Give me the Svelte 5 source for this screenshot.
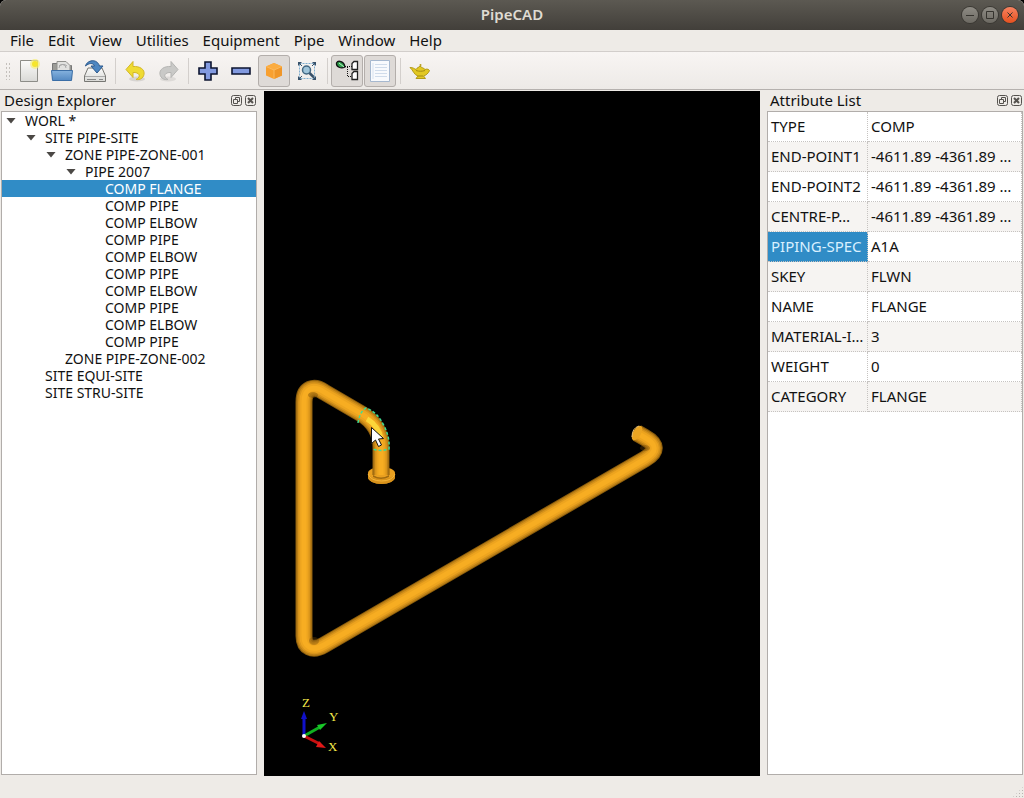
<script lang="ts">
  const menus = ['File', 'Edit', 'View', 'Utilities', 'Equipment', 'Pipe', 'Window', 'Help']

  const tools = [
    { id: 'new', label: 'New' },
    { id: 'open', label: 'Open' },
    { id: 'save', label: 'Save' },
    { id: 'sep' },
    { id: 'undo', label: 'Undo' },
    { id: 'redo', label: 'Redo' },
    { id: 'sep' },
    { id: 'add', label: 'Add' },
    { id: 'remove', label: 'Remove' },
    { id: 'shaded', label: 'Shaded', checked: true },
    { id: 'fit', label: 'Fit all' },
    { id: 'sep' },
    { id: 'tree', label: 'Design Explorer', checked: true },
    { id: 'list', label: 'Attribute List', checked: true },
    { id: 'sep' },
    { id: 'about', label: 'About' },
  ]

  const nodes = [
    { level: 1, text: 'WORL *', open: true },
    { level: 2, text: 'SITE PIPE-SITE', open: true },
    { level: 3, text: 'ZONE PIPE-ZONE-001', open: true },
    { level: 4, text: 'PIPE 2007', open: true },
    { level: 5, text: 'COMP FLANGE' },
    { level: 5, text: 'COMP PIPE' },
    { level: 5, text: 'COMP ELBOW' },
    { level: 5, text: 'COMP PIPE' },
    { level: 5, text: 'COMP ELBOW' },
    { level: 5, text: 'COMP PIPE' },
    { level: 5, text: 'COMP ELBOW' },
    { level: 5, text: 'COMP PIPE' },
    { level: 5, text: 'COMP ELBOW' },
    { level: 5, text: 'COMP PIPE' },
    { level: 3, text: 'ZONE PIPE-ZONE-002' },
    { level: 2, text: 'SITE EQUI-SITE' },
    { level: 2, text: 'SITE STRU-SITE' },
  ]

  const attributes = [
    ['TYPE', 'COMP'],
    ['END-POINT1', '-4611.89 -4361.89 …'],
    ['END-POINT2', '-4611.89 -4361.89 …'],
    ['CENTRE-P…', '-4611.89 -4361.89 …'],
    ['PIPING-SPEC', 'A1A'],
    ['SKEY', 'FLWN'],
    ['NAME', 'FLANGE'],
    ['MATERIAL-I…', '3'],
    ['WEIGHT', '0'],
    ['CATEGORY', 'FLANGE'],
  ]

  // centre line of the pipe run, drawn once per shade
  const run = 'M373 342 L380 346 Q400 357 381 368 L60 554 C48 561 40 556 40 545 L40 311 C40 297 50 294 60 301 L96 322 Q117 334 117 357 L117 384'
  const shades = [
    { color: '#8a5c0c', width: 17 },
    { color: '#bb7f16', width: 15 },
    { color: '#d8941b', width: 12 },
    { color: '#eda41f', width: 9 },
    { color: '#f7ad22', width: 5 },
  ]

  let selected = $state(4)
  let current = $state(4)
</script>

{#snippet dockTitle(title: string)}
  <header class="dock-title">
    <h2>{title}</h2>
    <button aria-label="Float {title}">
      <svg viewBox="0 0 11 11">
        <rect x=".5" y=".5" width="10" height="10" rx="2" />
        <path d="M4.5 4.5v-2h4v4h-2M2.5 4.5h4v4h-4z" />
      </svg>
    </button>
    <button aria-label="Close {title}">
      <svg viewBox="0 0 11 11">
        <rect x=".5" y=".5" width="10" height="10" rx="2" />
        <path class="cross" d="M3 3l5 5M8 3l-5 5" />
      </svg>
    </button>
  </header>
{/snippet}

<div class="window">
  <header class="titlebar">
    <h1>PipeCAD</h1>
    <div class="controls">
      <button aria-label="Minimize"><svg viewBox="0 0 16 16"><path d="M4 8.5h8" /></svg></button>
      <button aria-label="Maximize"><svg viewBox="0 0 16 16"><path d="M4.5 4.5h7v7h-7z" /></svg></button>
      <button class="close" aria-label="Close"><svg viewBox="0 0 16 16"><path d="M5.5 5.5l5 5M10.5 5.5l-5 5" /></svg></button>
    </div>
  </header>

  <nav class="menubar">
    {#each menus as menu}
      <button>{menu}</button>
    {/each}
  </nav>

  <div class="toolbar" role="toolbar" aria-label="Main">
    <span class="handle"></span>
    {#each tools as tool}
      {#if tool.id === 'sep'}
        <span class="sep"></span>
      {:else}
        <button class:checked={tool.checked} aria-label={tool.label}>
          <svg viewBox="0 0 24 24">
            {#if tool.id === 'new'}
              <path d="M3.5 1.5h17v21h-17z" fill="url(#paper)" stroke="#8d8d88" />
              <circle cx="18" cy="5" r="5" fill="#f7ee75" opacity=".7" />
              <circle cx="18" cy="5" r="3" fill="#f5e52d" />
            {:else if tool.id === 'open'}
              <path d="M2.5 20V4.5h5l2 2h12V20z" fill="#9c9c98" stroke="#777" />
              <path d="M7 2.5h9l4 4V14H7z" fill="#e2e2e0" stroke="#92928e" />
              <path d="M9 9a3 3 0 0 1 7 0M9 7a5 4 0 0 1 8 0" fill="none" stroke="#aaa" />
              <path d="M1.5 11.5h21l-1 10h-19z" fill="url(#folder)" stroke="#3b6ea6" />
            {:else if tool.id === 'save'}
              <path d="M5 9h14l3.5 8v5.5h-21V17z" fill="url(#paper)" stroke="#777773" />
              <path d="M2 17.5h20" stroke="#aaa" />
              <path d="M4 20.5h9M16 20.5h4" stroke="#888" />
              <path d="M2.5 7C4 1 14-1 16.5 7H20l-6 7-6-7h3.5C10 3.5 6 4 2.5 7z" fill="#4d86c1" stroke="#2c598d" />
            {:else if tool.id === 'undo'}
              <ellipse cx="14" cy="20" rx="8" ry="2.5" fill="#000" opacity=".1" />
              <path d="M10 2.5v5c7-.5 12 3 11 8-1 4-4 5.5-8 5 6-3 3-7.5-3-7v5l-7-8z" fill="#efdb33" stroke="#d2b728" />
            {:else if tool.id === 'redo'}
              <ellipse cx="12" cy="20" rx="8" ry="2.5" fill="#000" opacity=".08" />
              <path d="M15 2.5v5c-7-.5-12 3-11 8 1 4 4 5.5 8 5-6-3-3-7.5 3-7v5l7-8z" fill="#c9c9c7" stroke="#b5b5b3" />
            {:else if tool.id === 'add'}
              <path d="M9 3h6v6h6v6h-6v6H9v-6H3V9h6z" fill="#829ae0" stroke="#0c1430" stroke-width="1.6" />
            {:else if tool.id === 'remove'}
              <path d="M3 9h18v6H3z" fill="#829ae0" stroke="#0c1430" stroke-width="1.6" />
            {:else if tool.id === 'shaded'}
              <path d="M12 4l8 3.5v9L12 20l-8-3.5v-9z" fill="#f8a030" />
              <path d="M12 4l8 3.5-8 3.5-8-3.5z" fill="#fbac40" />
              <path d="M12 11v9l8-3.5v-9z" fill="#f09628" />
              <path d="M4 7.5l8 3.5 8-3.5M12 11v9" fill="none" stroke="#fcb95c" />
            {:else if tool.id === 'fit'}
              <path d="M4.5 4.5h15v15h-15z" fill="none" stroke="#7faed0" stroke-dasharray="2 1" />
              <path d="M4 4l3 3M20 4l-3 3M4 20l3-3M20 20l-3-3" stroke="#37516a" />
              <path d="M3 3h4l-4 4zM21 3v4l-4-4zM3 21v-4l4 4zM21 21h-4l4-4z" fill="#37516a" />
              <circle cx="11.5" cy="11" r="4" fill="#9fc4d9" stroke="#426782" stroke-width="1.5" />
              <path d="M14.5 14l4 4" stroke="#37516a" stroke-width="2.5" />
            {:else if tool.id === 'tree'}
              <path d="M1.5 4C3 1 9 2 10 8 6 10 1 8 1.5 4z" fill="#2da04b" stroke="#111" stroke-width="1.3" />
              <path d="M4 4l5 4" stroke="#c4efcc" />
              <path d="M10 7.5h7M12.5 8v9M13 17.5h4" fill="none" stroke="#111" stroke-dasharray="1 1" />
              <path d="M17 4.5l2-2h3.5v8H17zM17 14.5l2-2h3.5v8H17z" fill="#fff" stroke="#222" stroke-width="1.3" />
            {:else if tool.id === 'list'}
              <path d="M2.5 1.5h19v21h-19z" fill="#f8fafd" stroke="#a6b8cf" />
              <path d="M7 5.5h12M7 8.5h12M7 11.5h12M7 14.5h12M7 17.5h12" stroke="#d0dceb" />
              <path d="M5 4v16" stroke="#d7e2f0" />
            {:else}
              <path d="M2 8.5c3 0 4 1 6 2 1-2 3-2 4-3.5 1 1.5 4 2 5 3.5 2-1 4 0 4.5 1-1 3-4 5-6 5.5l2 2.5H8l2-2.500C6 16 5 11 2 8.5z" fill="#e2c821" stroke="#b39b18" />
              <path d="M8 11.5c3 1 6 1 9 0M10 17h5" fill="none" stroke="#a38c12" />
              <circle cx="12.5" cy="6" r="1" fill="#b79f18" />
            {/if}
          </svg>
        </button>
      {/if}
    {/each}
  </div>

  <main>
    <section class="dock left">
      {@render dockTitle('Design Explorer')}
      <ul class="tree" role="tree" aria-label="Design Explorer">
        {#each nodes as node, i}
          <li class="level-{node.level}" role="treeitem" aria-level={node.level} aria-selected={selected === i}>
            <button class:selected={selected === i} onclick={() => (selected = i)}>
              <span class="arrow" class:open={node.open}></span>{node.text}
            </button>
          </li>
        {/each}
      </ul>
    </section>

    <section class="view" aria-label="3D view">
      <svg viewBox="0 0 496 685">
        <!-- flange -->
        <path d="M104 382v4a13.5 7 0 0 0 27 0v-4z" fill="#d8921b" />
        <ellipse cx="117.5" cy="382" rx="13.5" ry="6" fill="#e9a020" />
        {#each shades as shade}
          <path d={run} fill="none" stroke={shade.color} stroke-width={shade.width} stroke-linejoin="round" />
        {/each}
        <path d="M104 383v3a13.5 7 0 0 0 27 0v-3q-3 6-13.5 6t-13.5-6z" fill="#d8921b" />
        <path d="M109 384q8 5 16 0v2q-8 4-16 0z" fill="#a06a10" />
        <path d="M104 383q3 7 13.5 7t13.500-7" fill="none" stroke="#f5b53a" />
        <!-- open pipe end -->
        <ellipse cx="373" cy="342" rx="4" ry="8" transform="rotate(30 373 342)" fill="#eba522" />
        <path d="M368 346q0-9 7-11" fill="none" stroke="#e8c072" />
        <!-- inner side of the bends -->
        <ellipse cx="49" cy="304" rx="5" ry="3" fill="#704808" opacity=".4" />
        <ellipse cx="50" cy="550" rx="5" ry="4" fill="#704808" opacity=".35" />
        <ellipse cx="381" cy="357" rx="5" ry="3" fill="#704808" opacity=".35" />
        <!-- highlighted elbow -->
        <path d="M103 328q12 7 14 20" fill="none" stroke="#fff04a" stroke-width="5" opacity=".6" />
        <path d="M94 332q2-12 8-15 11 4 17 16 7 12 6 25-8 3-16 0" fill="none" stroke="#3fdc95" stroke-width="1.5" stroke-dasharray="3 2" />
        <!-- mouse pointer -->
        <path d="M107.5 336.5v16l4-3.5 3 6.5 3-1.5-3-6 5-.5z" fill="#fff" stroke="#111" />
        <!-- axes -->
        <g class="axes">
          <path d="M40 645v-18" stroke="#1010c8" stroke-width="3" />
          <path d="M37 628l3-8 3 8z" fill="#1010c8" />
          <path d="M40 645l16-9" stroke="#10b020" stroke-width="3" />
          <path d="M53 634l10-2-7 7z" fill="#18c828" />
          <path d="M40 645l16 8" stroke="#c81010" stroke-width="3" />
          <path d="M55 650l7 7-10-1z" fill="#e01818" />
          <circle cx="40" cy="645" r="2" fill="#fff" />
          <text x="38" y="616">Z</text>
          <text x="65" y="630">Y</text>
          <text x="64" y="660">X</text>
        </g>
      </svg>
    </section>

    <section class="dock right">
      {@render dockTitle('Attribute List')}
      <div class="sheet">
        <table>
          <tbody>
            {#each attributes as [name, value], i}
              <tr>
                <th scope="row" class:selected={current === i} onclick={() => (current = i)}>{name}</th>
                <td>{value}</td>
              </tr>
            {/each}
          </tbody>
        </table>
      </div>
    </section>
  </main>

  <footer class="statusbar"><span class="grip"></span></footer>
</div>

<svg class="defs" aria-hidden="true">
  <defs>
    <linearGradient id="paper" x1="0" y1="0" x2="0" y2="1">
      <stop offset="0" stop-color="#fbfbfa" /><stop offset="1" stop-color="#d9d9d6" />
    </linearGradient>
    <linearGradient id="folder" x1="0" y1="0" x2="0" y2="1">
      <stop offset="0" stop-color="#85b2de" /><stop offset="1" stop-color="#5489c2" />
    </linearGradient>
  </defs>
</svg>

<style>
  :global(body) { margin: 0; background: #000; }
  .window {
    display: flex; flex-direction: column; min-height: 100vh;
    background: #eeebe7; color: #111;
    font-family: "Noto Sans", "Open Sans", sans-serif; font-size: 15px;
    border-radius: 6px 6px 0 0; overflow: hidden;
  }
  button { font: inherit; color: inherit; background: none; border: 0; padding: 0; margin: 0; }
  h1, h2 { margin: 0; font-size: 15px; }
  .defs { display: block; width: 0; height: 0; position: absolute; }

  .titlebar {
    display: grid; grid-template-columns: 1fr auto 1fr; align-items: center;
    height: 30px; padding: 0 6px; box-sizing: border-box;
    background: linear-gradient(#5c5952, #423f3a); color: #dfdbd2;
  }
  .titlebar h1 { grid-column: 2; font-weight: 600; line-height: 20px; padding-bottom: 2px; }
  .controls { display: flex; gap: 4px; justify-self: end; }
  .controls button {
    width: 16px; height: 16px; border-radius: 50%;
    background: linear-gradient(#8e8b84, #6c6962); box-shadow: 0 0 0 1px #3a3833;
  }
  .controls .close { background: linear-gradient(#f78260, #e6511f); }
  .controls svg { display: block; fill: none; stroke: #35332e; }

  .menubar { display: flex; gap: 14px; height: 22px; padding: 0 10px; border-bottom: 1px solid #d2cecb; box-sizing: border-box; }
  .menubar button { line-height: 21px; }

  .toolbar {
    display: flex; align-items: center; gap: 1px;
    height: 38px; padding-left: 5px; box-sizing: border-box;
    background: linear-gradient(#f8f5f3, #edeae7); border-bottom: 1px solid #b5b1ae;
  }
  .toolbar button {
    width: 32px; height: 32px; padding: 3px; border: 1px solid transparent;
    border-radius: 3px; box-sizing: border-box;
  }
  .toolbar button svg { display: block; width: 24px; height: 24px; }
  .toolbar button.checked { background: #dedad7; border-color: #b3aeab; }
  .handle {
    width: 7px; height: 18px;
    background: radial-gradient(circle, #c4c0bc 1px, transparent 1px) 0 0 / 3px 4px;
  }
  .sep { width: 6px; height: 26px; background: linear-gradient(#d3cfcc, #d3cfcc) center / 1px 100% no-repeat; }

  main {
    flex: 1; display: grid; gap: 7px; padding-top: 1px;
    grid-template-columns: 257px minmax(0, 1fr) 257px;
  }
  .dock { display: flex; flex-direction: column; min-width: 0; padding-bottom: 1px; }
  .left { padding-left: 1px; }
  .right { padding-right: 1px; }
  .dock-title { display: flex; align-items: center; gap: 3px; height: 20px; padding-right: 1px; }
  .dock-title h2 { flex: 1; padding: 0 0 2px 3px; font-weight: 400; line-height: 20px; }
  .dock-title svg { display: block; width: 11px; height: 11px; fill: none; stroke: #55524e; }
  .dock-title button { padding-bottom: 2px; }
  .dock-title .cross { stroke-width: 2; }

  .tree {
    flex: 1; margin: 0; padding: 0; list-style: none; font-size: 14px;
    background: #fff; border: 1px solid #b1adaa;
  }
  .tree button { display: flex; align-items: center; width: 100%; height: 17px; line-height: 17px; text-align: left; white-space: nowrap; }
  .tree .selected { background: #308cc6; color: #fff; }
  .level-1 button { padding-left: 4px; }
  .level-2 button { padding-left: 24px; }
  .level-3 button { padding-left: 44px; }
  .level-4 button { padding-left: 64px; }
  .level-5 button { padding-left: 84px; }
  .arrow { width: 19px; height: 6px; flex-shrink: 0; }
  .arrow.open::before {
    content: ''; display: block; width: 10px; height: 6px;
    background: #4b4845; clip-path: polygon(0 0, 100% 0, 50% 100%);
  }

  .view { background: #000; display: flex; }
  .view svg { width: 100%; }
  .axes text { fill: #f3e84b; font: 13px "Liberation Serif", serif; }

  .sheet { flex: 1; background: #fff; border: 1px solid #b1adaa; }
  table { width: 100%; table-layout: fixed; border-collapse: separate; border-spacing: 0; }
  th, td {
    height: 30px; padding: 0 3px 2px; box-sizing: border-box; line-height: 20px;
    font-weight: 400; text-align: left; white-space: nowrap; overflow: hidden;
    border-right: 1px dotted #c6c3c1; border-bottom: 1px dotted #c6c3c1;
  }
  th { width: 100px; }
  tr:nth-child(even) { background: #f6f4f2; }
  th.selected { background: #308cc6; color: #d9f0ff; }

  .statusbar { display: flex; justify-content: flex-end; align-items: flex-end; height: 22px; }
  .grip {
    width: 12px; height: 12px; clip-path: polygon(100% 0, 100% 100%, 0 100%);
    background: radial-gradient(circle, #b9b5b1 1px, transparent 1px) 0 0 / 3px 3px;
  }
</style>
